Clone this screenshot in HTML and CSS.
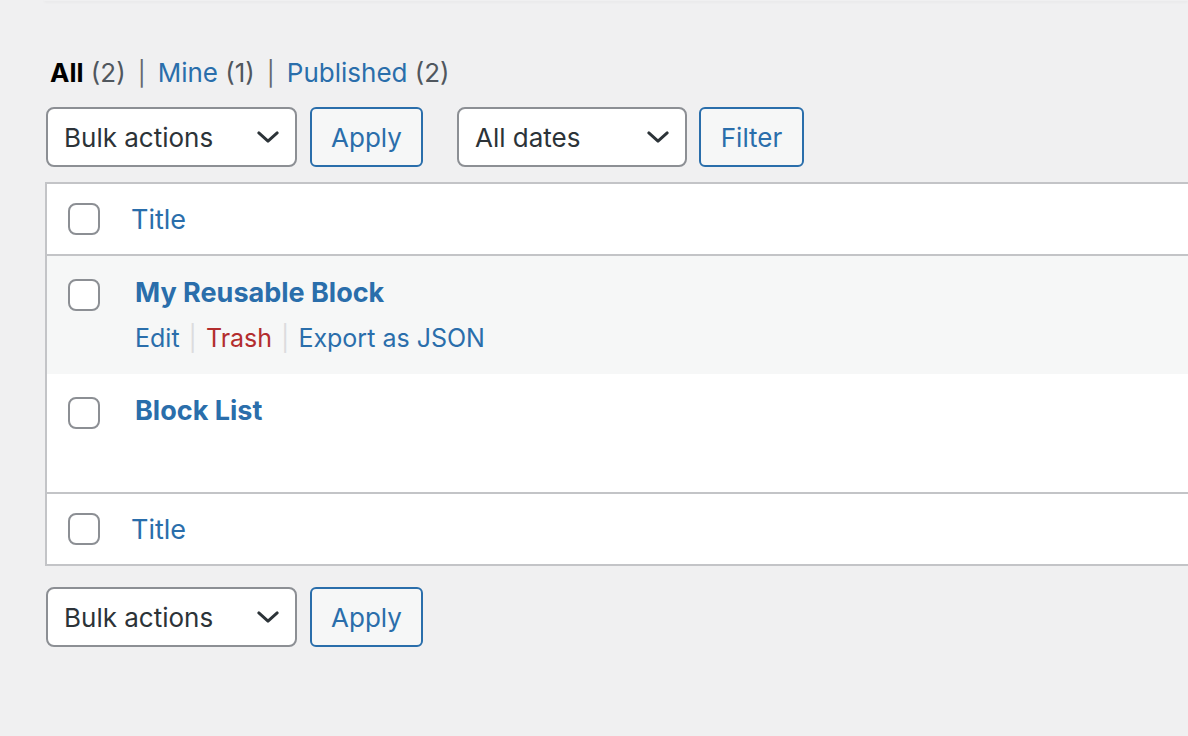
FILE: index.html
```html
<!DOCTYPE html>
<html>
<head>
<meta charset="utf-8">
<link rel="stylesheet" href="styles.css">
</head>
<body>
<div class="topbar"></div>
<div class="wrap">
  <ul class="subsubsub">
    <li><span class="current">All</span> <span class="count">(2)</span></li>
    <li class="sep">|</li>
    <li><a class="link">Mine</a> <span class="count">(1)</span></li>
    <li class="sep">|</li>
    <li><a class="link">Published</a> <span class="count">(2)</span></li>
  </ul>

  <div class="tablenav top">
    <div class="select bulk">Bulk actions<svg class="chev" viewBox="0 0 24 14"><path d="M2 2 L12 11 L22 2" fill="none" stroke="#2c3338" stroke-width="3.2" stroke-linecap="round" stroke-linejoin="round"/></svg></div>
    <div class="button apply">Apply</div>
    <div class="select dates">All dates<svg class="chev" viewBox="0 0 24 14"><path d="M2 2 L12 11 L22 2" fill="none" stroke="#2c3338" stroke-width="3.2" stroke-linecap="round" stroke-linejoin="round"/></svg></div>
    <div class="button filter">Filter</div>
  </div>

  <div class="table">
    <div class="row head">
      <span class="cb"></span>
      <a class="col-title">Title</a>
    </div>
    <div class="row item alt">
      <span class="cb"></span>
      <div class="cell">
        <a class="row-title">My Reusable Block</a>
        <div class="row-actions">
          <a class="link">Edit</a><span class="bar">|</span><a class="trash">Trash</a><span class="bar">|</span><a class="link">Export as JSON</a>
        </div>
      </div>
    </div>
    <div class="row item">
      <span class="cb"></span>
      <div class="cell">
        <a class="row-title">Block List</a>
      </div>
    </div>
    <div class="row head foot">
      <span class="cb"></span>
      <a class="col-title">Title</a>
    </div>
  </div>

  <div class="tablenav bottom">
    <div class="select bulk">Bulk actions<svg class="chev" viewBox="0 0 24 14"><path d="M2 2 L12 11 L22 2" fill="none" stroke="#2c3338" stroke-width="3.2" stroke-linecap="round" stroke-linejoin="round"/></svg></div>
    <div class="button apply">Apply</div>
  </div>
</div>
</body>
</html>
```

FILE: styles.css
```css
html, body {
  margin: 0;
  padding: 0;
  background: #f0f0f1;
  overflow: hidden;
  height: 736px;
}
body {
  font-family: Inter, "Noto Sans", "Liberation Sans", sans-serif;
  color: #1d2327;
}
.topbar {
  margin-left: 44px;
  height: 1px;
  background: #f0f0f1;
  box-shadow: 0 1px 3px rgba(0,0,0,0.08);
}
.wrap {
  padding-left: 46px;
  width: 1200px;
}
.subsubsub {
  list-style: none;
  margin: 0;
  padding: 52px 0 0 4px;
  display: flex;
  align-items: baseline;
  font-size: 26px;
  line-height: 40px;
  color: #50575e;
}
.subsubsub li { white-space: pre; }
.subsubsub .sep { margin: 0 12px; color: #646970; font-size: 24px; }
.current { color: #000; font-weight: 700; }
.link { color: #2a6eab; }
.count { color: #50575e; }

.tablenav {
  display: flex;
  align-items: center;
  height: 60px;
}
.tablenav.top { margin-top: 13px; }
.tablenav.bottom { margin-top: 21px; }

.select {
  box-sizing: border-box;
  height: 60px;
  border: 2px solid #8c8f94;
  border-radius: 8px;
  background: #fff;
  display: flex;
  align-items: center;
  justify-content: space-between;
  padding: 0 16px 0 16px;
  font-size: 26px;
  color: #2c3338;
}
.select.bulk { width: 251px; }
.select.dates { width: 230px; margin-left: 34px; }
.chev { width: 22px; height: 13px; }

.button {
  box-sizing: border-box;
  height: 60px;
  border: 2px solid #2a6eab;
  border-radius: 6px;
  background: #f6f7f7;
  color: #2a6eab;
  font-size: 26px;
  display: flex;
  align-items: center;
  justify-content: center;
  margin-left: 13px;
}
.button.apply { width: 113px; }
.button.filter { width: 105px; margin-left: 12px; }

.table {
  margin-top: 15px;
  margin-left: -1px;
  border: 2px solid #c3c4c7;
  border-right: none;
  background: #fff;
}
.row {
  display: flex;
  padding-left: 21px;
}
.row.head {
  height: 70px;
  align-items: center;
  border-bottom: 2px solid #c3c4c7;
}
.row.foot {
  border-bottom: none;
  border-top: 2px solid #c3c4c7;
  height: 70px;
}
.row.item { height: 118px; align-items: flex-start; }
.row.alt { background: #f6f7f7; }
.row.item .cb { margin-top: 23px; }
.cb {
  box-sizing: border-box;
  width: 32px;
  height: 32px;
  border: 2px solid #8c8f94;
  border-radius: 8px;
  background: #fff;
  flex: none;
}
.col-title {
  margin-left: 31px;
  font-size: 27px;
  color: #2a6eab;
}
.cell {
  margin-left: 35px;
  padding-top: 18px;
}
.row-title {
  display: block;
  font-size: 27px;
  font-weight: 700;
  color: #2a6eab;
  line-height: 38px;
}
.row-actions {
  margin-top: 8px;
  font-size: 25px;
  line-height: 36px;
  display: flex;
}
.bar { color: #dcdcde; margin: 0 9px; }
.trash { color: #b32d2e; }
```
